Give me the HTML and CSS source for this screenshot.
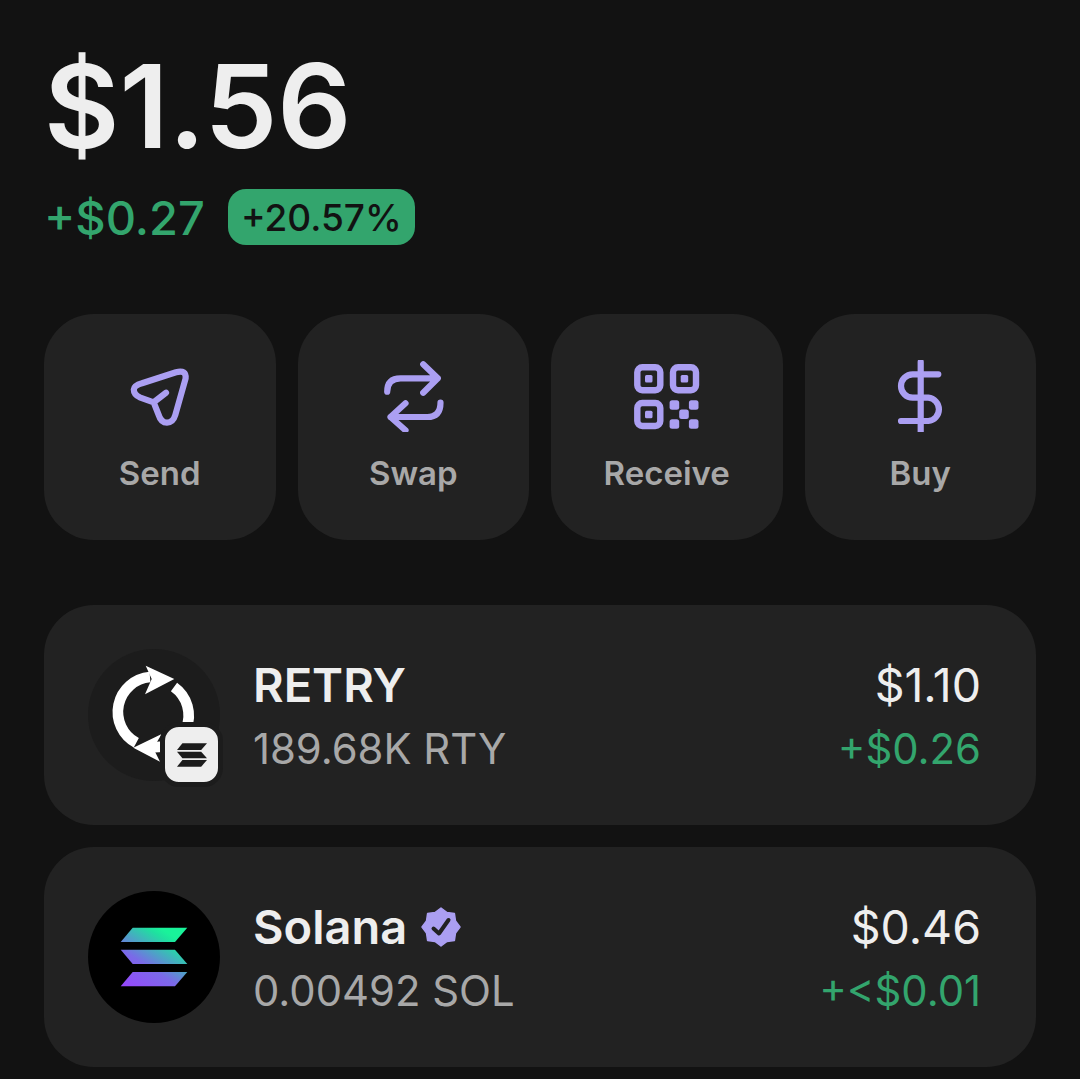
FILE: index.html
```html
<!DOCTYPE html>
<html lang="en">
<head>
<meta charset="utf-8">
<title>Wallet</title>
<link rel="stylesheet" href="styles.css">
</head>
<body>
<main class="page">
  <header class="summary">
    <div class="balance">$1.56</div>
    <div class="delta">
      <span class="delta-amount">+$0.27</span>
      <span class="delta-pill">+20.57%</span>
    </div>
  </header>

  <nav class="actions">
    <button class="action">
      <svg class="action-icon" viewBox="0 0 72 72"><path d="M18 23.3 52 12.2Q62.5 9.5 61.6 18.5L51.3 55Q49 62.7 43 62.7 37 62.7 34.7 55L29.7 42.3 15.7 37.3Q9.8 34.5 9.8 29.5 10.2 25.5 18 23.3ZM29.7 42.3 42 32.7"/></svg>
      <span class="action-label">Send</span>
    </button>
    <button class="action">
      <svg class="action-icon" viewBox="0 0 72 72"><path d="M46.2 4.3 60.8 18.3 46.2 32.7M60.8 18.3H23.5Q10.2 18.3 10.2 31.7M28.5 43.3 13.5 57 28.5 70.3M13.5 57H50.2Q63.5 57 63.5 42.7"/></svg>
      <span class="action-label">Swap</span>
    </button>
    <button class="action">
      <svg class="action-icon" viewBox="0 0 72 72">
        <rect class="qr-frame" x="6.3" y="7.3" width="23" height="23" rx="5"/>
        <rect class="qr-frame" x="42" y="7.3" width="23" height="23" rx="5"/>
        <rect class="qr-frame" x="6.3" y="43" width="23" height="23" rx="5"/>
        <rect class="qr-dot" x="14" y="15" width="7.5" height="7.5" rx="1.5"/>
        <rect class="qr-dot" x="49.7" y="15" width="7.5" height="7.5" rx="1.5"/>
        <rect class="qr-dot" x="14" y="50.8" width="7.5" height="7.5" rx="1.5"/>
        <rect class="qr-dot" x="38.6" y="40.2" width="9.6" height="9.6" rx="2.5"/>
        <rect class="qr-dot" x="57.9" y="40.2" width="9.6" height="9.6" rx="2.5"/>
        <rect class="qr-dot" x="48.2" y="49.5" width="9.6" height="9.6" rx="2.5"/>
        <rect class="qr-dot" x="38.6" y="59.2" width="9.6" height="9.6" rx="2.5"/>
        <rect class="qr-dot" x="57.9" y="59.2" width="9.6" height="9.6" rx="2.5"/>
      </svg>
      <span class="action-label">Receive</span>
    </button>
    <button class="action">
      <svg class="action-icon" viewBox="0 0 72 72"><path d="M36.7 2V72M54.3 14.3H28.7A11.7 11.7 0 0 0 28.7 37.7H44.3A11.7 11.7 0 0 1 44.3 61H17"/></svg>
      <span class="action-label">Buy</span>
    </button>
  </nav>

  <section class="tokens">
    <article class="token">
      <div class="token-logo retry-logo">
        <svg class="logo-art" viewBox="0 0 132 132">
          <path class="retry-arc" d="M48.3 93.7A35 35 0 0 1 62 28"/>
          <path class="retry-head" d="M57.7 16.7 86.3 30 57 45.3 63.7 30Z"/>
          <path class="retry-arc" d="M86 38A35 35 0 0 1 98 80"/>
          <path class="retry-arc" d="M62 98.5 75 97.7"/>
          <path class="retry-head" d="M73.7 85 45.3 98.7 72 112.7 65.3 99.3Z"/>
        </svg>
        <span class="chain-badge">
          <svg class="chain-mark" viewBox="0 0 36 28">
            <path d="M6.5 0H36L29 8H0Z"/><path d="M0 10H29L36 18H6.5Z"/><path d="M6.5 20H36L29 28H0Z"/>
          </svg>
        </span>
      </div>
      <div class="token-main">
        <div class="token-name">RETRY</div>
        <div class="token-sub">189.68K RTY</div>
      </div>
      <div class="token-values">
        <div class="token-value">$1.10</div>
        <div class="token-change">+$0.26</div>
      </div>
    </article>

    <article class="token">
      <div class="token-logo solana-logo">
        <svg class="logo-art" viewBox="0 0 132 132">
          <defs>
            <linearGradient id="sol" gradientUnits="userSpaceOnUse" x1="36" y1="98" x2="74" y2="38">
              <stop offset="0" stop-color="#9945ff"/>
              <stop offset=".45" stop-color="#7a6ae8"/>
              <stop offset=".65" stop-color="#4fa0c8"/>
              <stop offset=".9" stop-color="#1fe0a0"/>
              <stop offset="1" stop-color="#19f39a"/>
            </linearGradient>
          </defs>
          <path class="sol-bar" d="M44.7 36.7H99.3L87 51H32.7Z"/>
          <path class="sol-bar" d="M32.7 58.7H87L99.3 73H44.7Z"/>
          <path class="sol-bar" d="M44.7 81H99.3L87 95.3H32.7Z"/>
        </svg>
      </div>
      <div class="token-main">
        <div class="token-name">Solana
          <svg class="verified" viewBox="0 0 40 40">
            <path class="verified-seal" d="M20 1 26 5.5 33.4 6.6 34.5 14 39 20 34.5 26 33.4 33.4 26 34.5 20 39 14 34.5 6.6 33.4 5.5 26 1 20 5.5 14 6.6 6.6 14 5.5Z"/>
            <path class="verified-check" d="M12.5 21.5 18 26.5 27.5 13"/>
          </svg>
        </div>
        <div class="token-sub">0.00492 SOL</div>
      </div>
      <div class="token-values">
        <div class="token-value">$0.46</div>
        <div class="token-change">+&lt;$0.01</div>
      </div>
    </article>
  </section>
</main>
</body>
</html>
```

FILE: styles.css
```css
* { box-sizing: border-box; }

html, body {
  margin: 0;
  height: 100%;
  background: #121212;
  overflow: hidden;
}

body {
  font-family: Inter, "Liberation Sans", sans-serif;
  font-optical-sizing: none;
  color: #eeeeee;
}

.page {
  padding: 0 44px;
}

.summary {
  padding: 36px 0 0 0;
}

.balance {
  font-size: 116px;
  line-height: 140px;
  font-weight: 600;
}

.delta {
  display: flex;
  align-items: center;
  gap: 23px;
  height: 56px;
  margin-top: 13px;
}

.delta-amount {
  font-size: 47px;
  font-weight: 540;
  color: #33a56d;
}

.delta-pill {
  display: flex;
  align-items: center;
  height: 56px;
  padding: 0 13px;
  border-radius: 18px;
  background: #33a56d;
  color: #121212;
  font-size: 37px;
  font-weight: 520;
}

.actions {
  display: grid;
  grid-template-columns: repeat(4, 1fr);
  gap: 22px;
  margin-top: 69px;
}

.action {
  display: flex;
  flex-direction: column;
  align-items: center;
  height: 226px;
  padding: 46px 0 0;
  border: 0;
  border-radius: 50px;
  background: #222222;
  font-family: inherit;
  font-optical-sizing: none;
}

.action-icon {
  width: 72px;
  height: 72px;
  fill: none;
  stroke: #ab9ff2;
  stroke-width: 6.2;
  stroke-linecap: round;
  stroke-linejoin: round;
}

.qr-frame {
  stroke-width: 6.4;
}

.qr-dot {
  fill: #ab9ff2;
  stroke: none;
}

.action-label {
  margin-top: 21px;
  font-size: 33px;
  line-height: 40px;
  font-weight: 600;
  color: #a8a8a8;
}

.tokens {
  display: flex;
  flex-direction: column;
  gap: 22px;
  margin-top: 65px;
}

.token {
  display: flex;
  align-items: center;
  height: 220px;
  padding: 0 55px 0 44px;
  border-radius: 50px;
  background: #222222;
}

.token-logo {
  position: relative;
  flex: none;
  width: 132px;
  height: 132px;
  border-radius: 50%;
}

.retry-logo { background: #1c1c1c; }
.solana-logo { background: #000000; }

.logo-art {
  display: block;
  width: 132px;
  height: 132px;
}

.retry-arc {
  fill: none;
  stroke: #ffffff;
  stroke-width: 10.7;
}

.retry-head { fill: #ffffff; }

.sol-bar { fill: url(#sol); }

.chain-badge {
  position: absolute;
  left: 72px;
  top: 73px;
  display: flex;
  align-items: center;
  justify-content: center;
  width: 63px;
  height: 65px;
  border: 5px solid #1c1c1c;
  border-radius: 19px;
  background: #eeeeee;
}

.chain-mark {
  width: 30px;
  height: 26px;
  fill: #1c1c1c;
}

.token-main {
  flex: 1;
  margin-left: 33px;
  padding-top: 4px;
}

.token-name {
  display: flex;
  align-items: center;
  gap: 14px;
  font-size: 47px;
  line-height: 64px;
  font-weight: 600;
  color: #eeeeee;
}

.token-sub {
  font-size: 41.8px;
  line-height: 64px;
  color: #a8a8a8;
}

.token-values {
  padding-top: 4px;
  text-align: right;
}

.token-value {
  font-size: 46.5px;
  line-height: 64px;
  color: #eeeeee;
}

.token-change {
  font-size: 41.8px;
  line-height: 64px;
  color: #33a56d;
}

.verified {
  width: 40px;
  height: 40px;
}

.verified-seal {
  fill: #ab9ff2;
  stroke: #ab9ff2;
  stroke-width: 1.5;
  stroke-linejoin: round;
}

.verified-check {
  fill: none;
  stroke: #222222;
  stroke-width: 4;
  stroke-linecap: round;
  stroke-linejoin: round;
}
```
